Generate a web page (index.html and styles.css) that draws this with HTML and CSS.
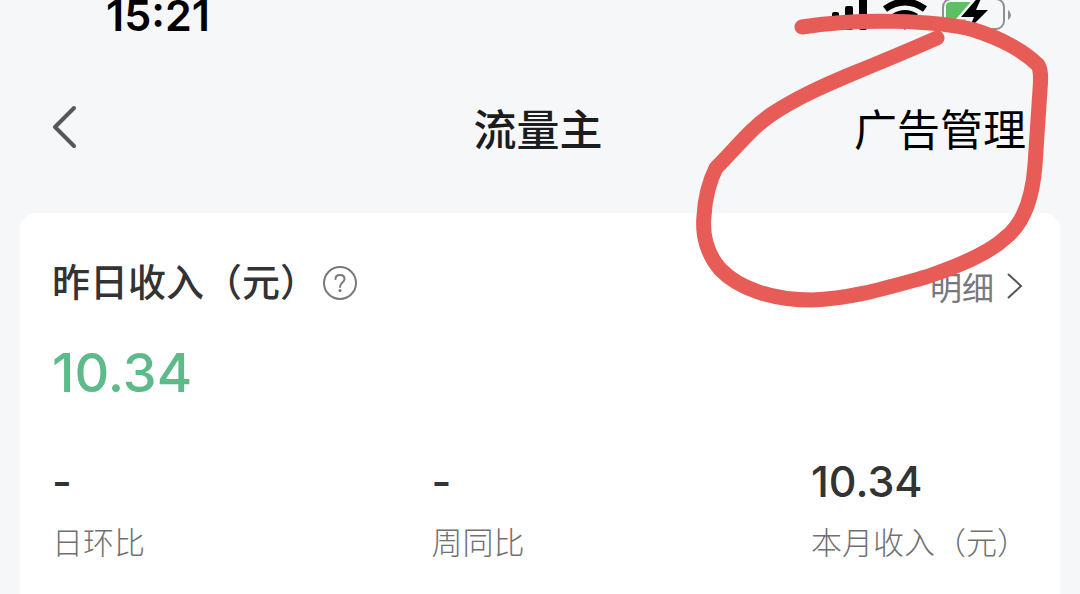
FILE: index.html
```html
<!DOCTYPE html>
<html lang="zh-CN">
<head>
    <meta charset="UTF-8">
    <meta name="viewport" content="width=device-width, initial-scale=1.0">
    <title>流量主</title>
    <link rel="stylesheet" href="styles.css">
</head>
<body>
    <div class="app-container">
        <div class="status-bar">
            <span class="time">15:21</span>
            <svg class="status-icons" width="184" height="32" viewBox="0 0 184 32" aria-hidden="true">
                <!-- signal -->
                <rect x="4" y="12" width="7" height="18" rx="2"/>
                <rect x="17" y="6" width="8" height="24" rx="2"/>
                <rect x="31" y="-3" width="8" height="33" rx="2"/>
                <!-- wifi -->
                <path d="M57 9 Q77 -5 97 9" fill="none" stroke="#000" stroke-width="7"/>
                <path d="M66 17 Q77 10 88 17" fill="none" stroke="#000" stroke-width="7"/>
                <path d="M71 22 Q77 17 83 22 L77 30 Z"/>
                <!-- battery -->
                <rect x="115" y="-1" width="61" height="30" rx="8" fill="none" stroke="#8e9094" stroke-width="2"/>
                <path d="M118 6 Q118 2 123 2 H146 L135 26 H123 Q118 26 118 20 Z" fill="#5cc162"/>
                <path d="M153 -6 L133 17 H146 L141 29 L160 10 H148 L155 -6 Z" stroke="#f5f7f9" stroke-width="5" paint-order="stroke"/>
                <path d="M180 10 Q183 12 183 15 Q183 18 180 20 Z" fill="#8e9094"/>
            </svg>
        </div>
        <header class="nav-bar">
            <button class="back-button" aria-label="返回">
                <svg width="28" height="44" viewBox="0 0 28 44">
                    <path d="M24 3 L5 22 L24 41" fill="none" stroke="#55575a" stroke-width="4" stroke-linecap="round" stroke-linejoin="round"/>
                </svg>
            </button>
            <h1>流量主</h1>
            <a href="#" class="manage-link">广告管理</a>
        </header>
        <main class="card">
            <div class="card-header">
                <h2>昨日收入（元）</h2>
                <button class="help-button" aria-label="说明">
                    <svg width="36" height="36" viewBox="0 0 36 36" fill="none" stroke="#77797b" stroke-width="2">
                        <circle cx="18" cy="18" r="16"/>
                        <path d="M13.500 14 Q13.500 10 18 10 Q22.500 10 22.500 14 Q22.500 16 20 18 Q18 19.500 18 22" stroke-linecap="round"/>
                        <circle cx="18" cy="25.500" r="1.500" fill="#77797b" stroke="none"/>
                    </svg>
                </button>
                <a href="#" class="detail-link">
                    明细
                    <svg width="18" height="28" viewBox="0 0 18 28">
                        <path d="M2 2 L15 14 L2 26" fill="none" stroke="#555" stroke-width="2"/>
                    </svg>
                </a>
            </div>
            <p class="income">10.34</p>
            <section class="stats">
                <div class="stat">
                    <p class="stat-value">-</p>
                    <p class="stat-label">日环比</p>
                </div>
                <div class="stat">
                    <p class="stat-value">-</p>
                    <p class="stat-label">周同比</p>
                </div>
                <div class="stat">
                    <p class="stat-value">10.34</p>
                    <p class="stat-label">本月收入（元）</p>
                </div>
            </section>
        </main>
        <!-- hand-drawn circle around the manage link -->
        <svg class="marker" width="400" height="320" viewBox="0 0 400 320" aria-hidden="true">
            <path d="M122 27 C178 18 257 20 294 30 C320 38 344 51 358 65 C361 70 361 77 360 90 L355 165 C353 192 346 222 325 238 C308 254 278 266 246 277 C206 288 170 299 132 300 C91 300 58 288 40 269 C28 255 22 236 24 216 C25 199 28 184 36 168 C58 146 70 129 92 114 C118 97 143 86 174 73 Q223 53 257 38" fill="none" stroke="#e75c56" stroke-width="15" stroke-linecap="round" stroke-linejoin="round"/>
        </svg>
    </div>
</body>
</html>
```

FILE: styles.css
```css
* {
    margin: 0;
    padding: 0;
    box-sizing: border-box;
}

body {
    font-family: Inter, "Noto Sans CJK SC", sans-serif;
    background-color: #f5f7f9;
    color: #333;
}

a {
    text-decoration: none;
}

button {
    border: none;
    background: none;
    cursor: pointer;
}

svg {
    display: block;
}

.app-container {
    position: relative;
    display: flex;
    flex-direction: column;
    min-height: 100vh;
    overflow: hidden;
}

.status-bar {
    display: flex;
    justify-content: space-between;
    padding: 0 68px 0 106px;
    height: 44px;
    color: #000;
}

.time {
    font-size: 43px;
    font-weight: 600;
    line-height: 30px;
}

.nav-bar {
    display: grid;
    grid-template-columns: 1fr auto 1fr;
    align-items: center;
    height: 169px;
    padding: 0 54px 4px 50px;
}

.back-button {
    justify-self: start;
}

.nav-bar h1 {
    font-size: 43px;
    font-weight: 500;
    color: #1b1c1e;
}

.manage-link {
    justify-self: end;
    font-size: 43px;
    color: #000;
}

.card {
    flex-grow: 1;
    margin: 0 20px;
    padding: 40px 32px 0;
    background-color: #fff;
    border-radius: 16px 16px 0 0;
}

.card-header {
    display: flex;
    align-items: center;
    height: 60px;
}

.card-header h2 {
    padding-bottom: 8px;
    font-size: 38px;
    font-weight: 500;
}

.help-button {
    margin-left: 4px;
}

.detail-link {
    display: flex;
    align-items: center;
    gap: 12px;
    margin-left: auto;
    padding: 6px 4px 0 0;
    font-size: 32px;
    color: #77797b;
}

.income {
    margin-top: 28px;
    font-size: 54px;
    font-weight: 500;
    line-height: 64px;
    color: #5dbb8a;
}

.stats {
    display: flex;
    justify-content: space-between;
    margin-top: 48px;
}

.stat-value {
    font-size: 43px;
    font-weight: 500;
    line-height: 56px;
}

.stat-label {
    margin-top: 10px;
    font-size: 31px;
    font-weight: 300;
    line-height: 48px;
    color: #707070;
}

.marker {
    position: absolute;
    top: 0;
    right: 0;
    pointer-events: none;
}
```
